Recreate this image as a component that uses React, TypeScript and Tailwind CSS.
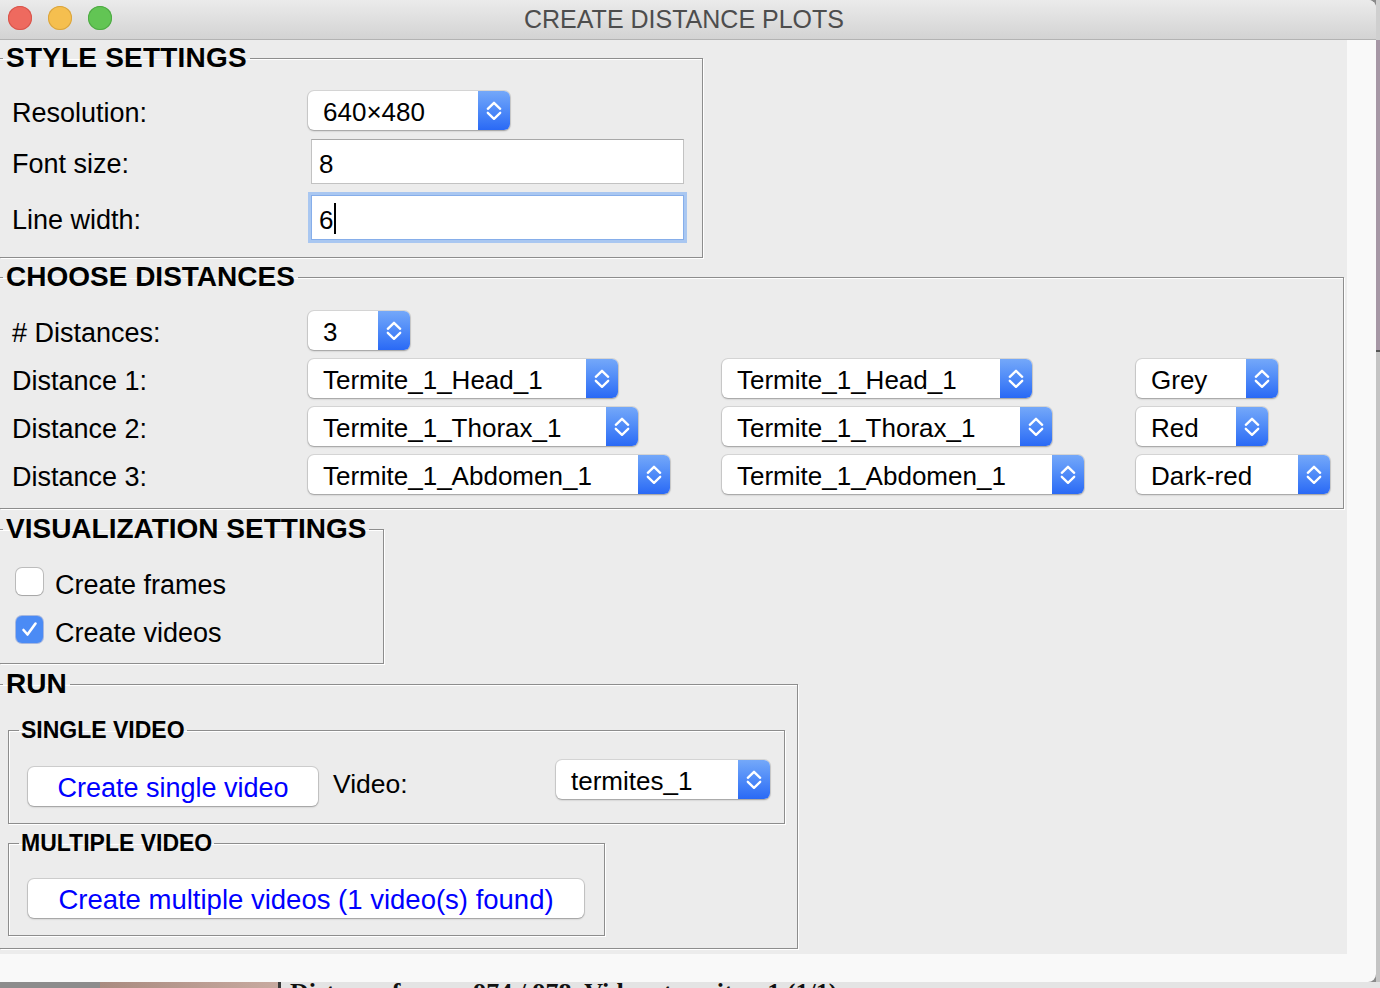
import React from "react";

const Chev = () => (
  <svg width="32" height="39" viewBox="0 0 32 39" fill="none">
    <path
      d="M9.8 17.8 L16 11.8 L22.2 17.8 M9.8 21.8 L16 27.8 L22.2 21.8"
      stroke="white"
      strokeWidth="2.3"
      strokeLinecap="round"
      strokeLinejoin="round"
    />
  </svg>
);

const Combo = ({ text, w }: { text: string; w: string }) => (
  <div
    className={`${w} h-[39px] flex rounded-[6px] bg-white shadow-[0_0_0_1px_rgba(0,0,0,0.09),0_1px_2px_rgba(0,0,0,0.28)]`}
  >
    <div className="flex-1 pl-[15px] pt-[4px] flex items-center text-[26px] text-black whitespace-nowrap">
      {text}
    </div>
    <div className="w-[32px] h-full rounded-r-[6px] bg-linear-to-b from-[#74a8f9] to-[#2a69f5]">
      <Chev />
    </div>
  </div>
);

const Check = ({ checked }: { checked: boolean }) =>
  checked ? (
    <div className="w-[27px] h-[27px] rounded-[6px] bg-[#4b8bf5] shadow-[0_0_0_1px_rgba(40,90,200,0.35)] flex items-center justify-center">
      <svg width="27" height="27" viewBox="0 0 27 27" fill="none">
        <path
          d="M7.5 14 L11.5 18.5 L19.5 7.5"
          stroke="white"
          strokeWidth="2.6"
          strokeLinecap="round"
          strokeLinejoin="round"
        />
      </svg>
    </div>
  ) : (
    <div className="w-[27px] h-[27px] rounded-[6px] bg-white shadow-[0_0_0_1px_rgba(0,0,0,0.2),0_1px_1px_rgba(0,0,0,0.12)]" />
  );

const Button = ({ text, w, size }: { text: string; w: string; size: string }) => (
  <div
    className={`${w} ${size} h-[39px] rounded-[6px] bg-white shadow-[0_0_0_1px_rgba(0,0,0,0.12),0_1px_2px_rgba(0,0,0,0.25)] flex items-center justify-center pt-[3px] text-[#0000ff] whitespace-nowrap`}
  >
    {text}
  </div>
);

const legendBig = "px-[3px] text-[28px] font-bold leading-[30px] text-black whitespace-nowrap";
const legendSmall = "px-[2px] text-[23px] font-bold leading-[26px] text-black whitespace-nowrap";
const fs =
  "border-t border-r border-b border-l-0 border-[#8d8d8d] shadow-[inset_0_1px_0_#ffffff,1px_1px_0_#ffffff] pl-[3px]";
const fsSub =
  "border border-[#8d8d8d] shadow-[inset_1px_1px_0_#ffffff,1px_1px_0_#ffffff] pl-[10px]";
const label = "w-[296px] pt-[5px] flex items-center text-[27px]";
const label2 = "w-[296px] pt-[6px] flex items-center text-[27px]";

export default function App() {
  return (
    <div className="w-[1380px] h-[988px] overflow-hidden flex flex-col bg-[#8a8a8a] font-['Liberation_Sans',Arial,sans-serif] text-black">
      <div className="flex h-[982px]">
        {/* window */}
        <div className="w-[1376px] h-[982px] bg-[#f9f9f9] rounded-tr-[8px] rounded-br-[8px] overflow-hidden flex flex-col">
          {/* title bar */}
          <div className="h-[40px] shrink-0 flex bg-linear-to-b from-[#ebebeb] to-[#d3d3d3] border-b border-[#b3b3b3]">
            <div className="w-[116px] flex items-center pl-[8px] gap-[16px] pb-[3px]">
              <div className="w-[24px] h-[24px] rounded-full bg-[#ee6a5f] shadow-[inset_0_0_0_1px_#d8554c]" />
              <div className="w-[24px] h-[24px] rounded-full bg-[#f5bf4f] shadow-[inset_0_0_0_1px_#d9a43f]" />
              <div className="w-[24px] h-[24px] rounded-full bg-[#62c554] shadow-[inset_0_0_0_1px_#4ea944]" />
            </div>
            <div className="flex-1 flex items-center justify-center text-[25px] text-[#4d4d4d] pt-[1px]">
              CREATE DISTANCE PLOTS
            </div>
            <div className="w-[124px]" />
          </div>

          {/* main content */}
          <div className="w-[1347px] h-[914px] bg-[#ececec] flex flex-col items-start">
            {/* STYLE SETTINGS */}
            <fieldset className={`${fs} mt-[3px] w-[703px] pb-[17px]`}>
              <legend className={`${legendBig} tracking-[0.2px]`}>STYLE SETTINGS</legend>
              <div className="pl-[9px] mt-[18px] flex flex-col">
                <div className="flex h-[39px] text-[26px]">
                  <div className={label}>Resolution:</div>
                  <Combo text="640×480" w="w-[202px]" />
                </div>
                <div className="flex h-[45px] mt-[9px] text-[26px]">
                  <div className={label2}>Font size:</div>
                  <div className="ml-[3px] w-[373px] h-[45px] bg-white border border-[#c2c2c2] border-t-[#a8a8a8] pl-[7px] pt-[5px] flex items-center">
                    8
                  </div>
                </div>
                <div className="flex h-[45px] mt-[11px] text-[26px]">
                  <div className={label2}>Line width:</div>
                  <div className="ml-[3px] w-[373px] h-[45px] bg-white border border-[#86aeea] shadow-[0_0_0_3px_#a9c7f1] pl-[7px] pt-[5px] flex items-center">
                    6<span className="inline-block w-[2px] h-[31px] bg-black ml-[1px] -mt-[4px]" />
                  </div>
                </div>
              </div>
            </fieldset>

            {/* CHOOSE DISTANCES */}
            <fieldset className={`${fs} mt-[4px] w-[1344px] pb-[14px]`}>
              <legend className={legendBig}>CHOOSE DISTANCES</legend>
              <div className="pl-[9px] mt-[19px] flex flex-col gap-[9px] text-[26px]">
                <div className="flex h-[39px]">
                  <div className={label}># Distances:</div>
                  <Combo text="3" w="w-[102px]" />
                </div>
                <div className="flex h-[39px]">
                  <div className={label}>Distance 1:</div>
                  <div className="w-[414px]">
                    <Combo text="Termite_1_Head_1" w="w-[310px]" />
                  </div>
                  <div className="w-[414px]">
                    <Combo text="Termite_1_Head_1" w="w-[310px]" />
                  </div>
                  <Combo text="Grey" w="w-[142px]" />
                </div>
                <div className="flex h-[39px]">
                  <div className={label}>Distance 2:</div>
                  <div className="w-[414px]">
                    <Combo text="Termite_1_Thorax_1" w="w-[330px]" />
                  </div>
                  <div className="w-[414px]">
                    <Combo text="Termite_1_Thorax_1" w="w-[330px]" />
                  </div>
                  <Combo text="Red" w="w-[132px]" />
                </div>
                <div className="flex h-[39px]">
                  <div className={label}>Distance 3:</div>
                  <div className="w-[414px]">
                    <Combo text="Termite_1_Abdomen_1" w="w-[362px]" />
                  </div>
                  <div className="w-[414px]">
                    <Combo text="Termite_1_Abdomen_1" w="w-[362px]" />
                  </div>
                  <Combo text="Dark-red" w="w-[194px]" />
                </div>
              </div>
            </fieldset>

            {/* VISUALIZATION SETTINGS */}
            <fieldset className={`${fs} mt-[5px] w-[384px] pb-[20px]`}>
              <legend className={legendBig}>VISUALIZATION SETTINGS</legend>
              <div className="pl-[13px] mt-[24px] flex flex-col gap-[21px] text-[27px]">
                <div className="flex h-[27px] items-center gap-[12px]">
                  <Check checked={false} />
                  <span className="pt-[7px]">Create frames</span>
                </div>
                <div className="flex h-[27px] items-center gap-[12px]">
                  <Check checked={true} />
                  <span className="pt-[7px]">Create videos</span>
                </div>
              </div>
            </fieldset>

            {/* RUN */}
            <fieldset className={`${fs} mt-[5px] w-[798px] pb-[12px]`}>
              <legend className={legendBig}>RUN</legend>
              <div className="pl-[5px] flex flex-col">
                <fieldset className={`${fsSub} mt-[18px] w-[777px] pb-[16px]`}>
                  <legend className={legendSmall}>SINGLE VIDEO</legend>
                  <div className="ml-[9px] mt-[17px] flex h-[47px] items-start text-[26px]">
                    <div className="mt-[7px]">
                      <Button text="Create single video" w="w-[290px]" size="text-[27px]" />
                    </div>
                    <div className="ml-[15px] w-[223px] h-[39px] flex items-center pt-[10px] text-[26.5px]">
                      Video:
                    </div>
                    <Combo text="termites_1" w="w-[214px]" />
                  </div>
                </fieldset>
                <fieldset className={`${fsSub} mt-[6px] w-[597px] pb-[17px]`}>
                  <legend className={legendSmall}>MULTIPLE VIDEO</legend>
                  <div className="ml-[9px] mt-[23px] flex">
                    <Button
                      text="Create multiple videos (1 video(s) found)"
                      w="w-[556px]"
                      size="text-[27.5px]"
                    />
                  </div>
                </fieldset>
              </div>
            </fieldset>
          </div>
        </div>
        {/* desktop right edge */}
        <div className="w-[4px] flex flex-col">
          <div className="h-[40px] bg-[#cfcfcf]" />
          <div className="h-[310px] bg-[#a697a5]" />
          <div className="h-[2px] bg-[#555555]" />
          <div className="flex-1 bg-[#c4c4c4]" />
        </div>
      </div>
      {/* desktop bottom strip (partly hidden window behind) */}
      <div className="h-[6px] flex overflow-hidden">
        <div className="w-[100px] bg-[#8c8c8c]" />
        <div className="w-[178px] bg-linear-to-r from-[#a98b80] to-[#c8aaa0]" />
        <div className="w-[3px] bg-[#3a3a3a]" />
        <div className="flex-1 bg-[#e4e4e4] pl-[9px] overflow-hidden">
          <div className="-mt-[2px] text-[26px] leading-none text-[#111111] whitespace-nowrap font-['Liberation_Serif',serif] font-bold">
            Distance frame: 974 / 978, Video: termites_1 (1/1)
          </div>
        </div>
      </div>
    </div>
  );
}
